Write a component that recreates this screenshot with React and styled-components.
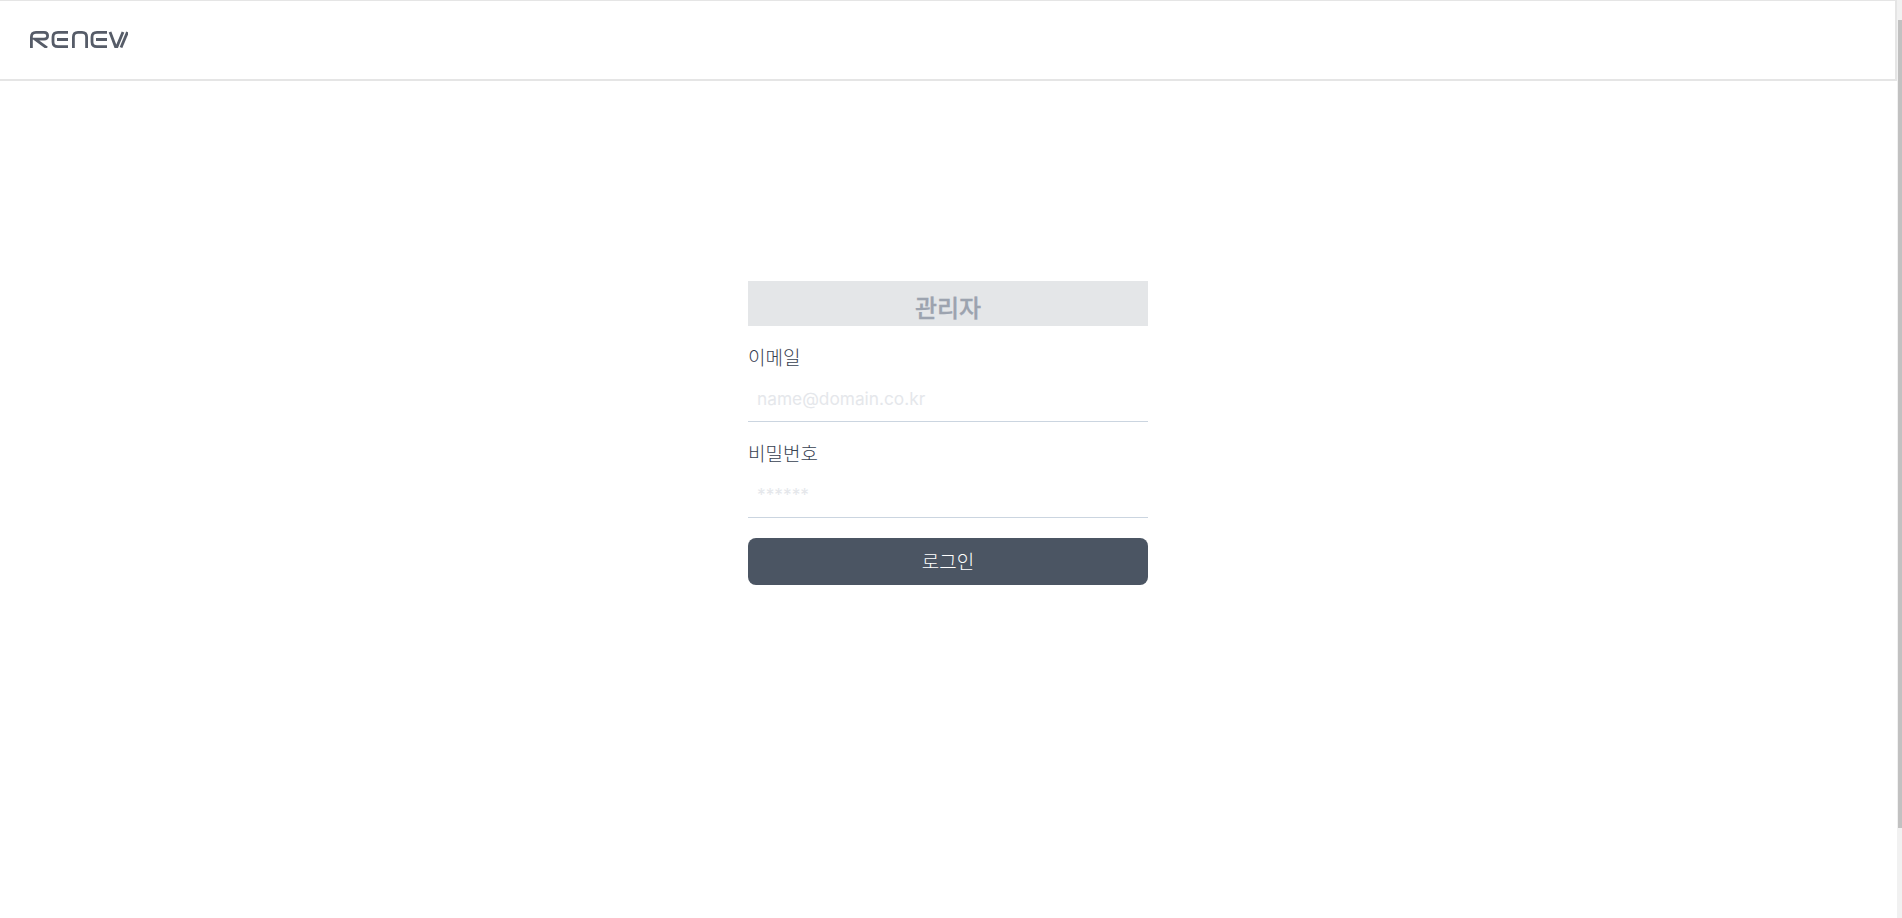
import React from "react";
import styled, { createGlobalStyle } from "styled-components";

const Global = createGlobalStyle`
  html, body { height: 100%; overflow: hidden; }
  body { margin: 0; background: #fff; font-family: Inter, "Noto Sans CJK KR", sans-serif; }
  * { box-sizing: border-box; }
`;
const Page = styled.div`display: flex; flex-direction: column;`;
const Header = styled.header`
  height: 81px; border-top: 1px solid #e5e5e5; border-bottom: 2px solid #e5e5e5; border-right: 2px solid #e5e5e5;
  margin-right: 5px; padding-left: 30px; padding-bottom: 1px; display: flex; align-items: center;
`;
const Form = styled.form`width: 400px; margin: 200px 0 0 748px; display: flex; flex-direction: column;`;
const Title = styled.h1`
  margin: 0; height: 45px; background: #e4e6e8; color: #9ca3af; font-size: 24px; font-weight: 500;
  -webkit-text-stroke: 0.3px #9ca3af; line-height: 55px; text-align: center; overflow: hidden;
`;
const Field = styled.div`display: flex; flex-direction: column; margin-top: ${p => p.$top}px;`;
const Label = styled.label`color: #374151; font-size: 19px; font-weight: 300; line-height: 28px;`;
const Input = styled.input`
  height: 49px; border: 0; border-bottom: 1px solid #cbd5e0; padding: 3px 9px 0; outline: none;
  font: 17.3px Inter, sans-serif;
  &::placeholder { color: #e5e7eb; }
`;
const Button = styled.button`
  margin-top: 20px; height: 47px; border: 0; border-radius: 8px; background: #4b5563; color: #fff;
  font: 300 19px Inter, "Noto Sans CJK KR", sans-serif; padding-bottom: 4px;
`;
const ScrollTrack = styled.div`
  position: fixed; top: 0; right: 0; bottom: 0; width: 5px; background: #f1f1f1;
`;
const ScrollThumb = styled.div`
  position: absolute; top: 20px; right: 0; width: 4px; height: 808px; background: #c1c1c1;
`;
const Logo = () => (
  <svg width="98" height="17" viewBox="0 0 98 17" fill="none" stroke="#565c68" strokeWidth="2.8">
    <path d="M1.4 17V6q0-4.6 4.6-4.6h8q3.6 0 3.6 3.4T14 8.2H5l12 8.8" />
    <path d="M38 1.4H28q-5 0-5 4.6v5q0 4.6 5 4.6h10M27 8.5h11" />
    <path d="M43.4 17V6q0-4.6 4.6-4.6h4q4.6 0 4.6 4.6v11" />
    <path d="M77 1.4H67q-5 0-5 4.6v5q0 4.6 5 4.6h10M66 8.5h11" />
    <path d="M80 1l5.5 14.5h1.5L93 1" />
    <path d="M91 16.5L97.5 1" />
  </svg>
);
export default function App() {
  return (
    <Page>
      <Global />
      <Header><Logo /></Header>
      <Form>
        <Title>관리자</Title>
        <Field $top={19}>
          <Label>이메일</Label>
          <Input placeholder="name@domain.co.kr" />
        </Field>
        <Field $top={19}>
          <Label>비밀번호</Label>
          <Input placeholder="******" />
        </Field>
        <Button type="button">로그인</Button>
      </Form>
      <ScrollTrack><ScrollThumb /></ScrollTrack>
    </Page>
  );
}
